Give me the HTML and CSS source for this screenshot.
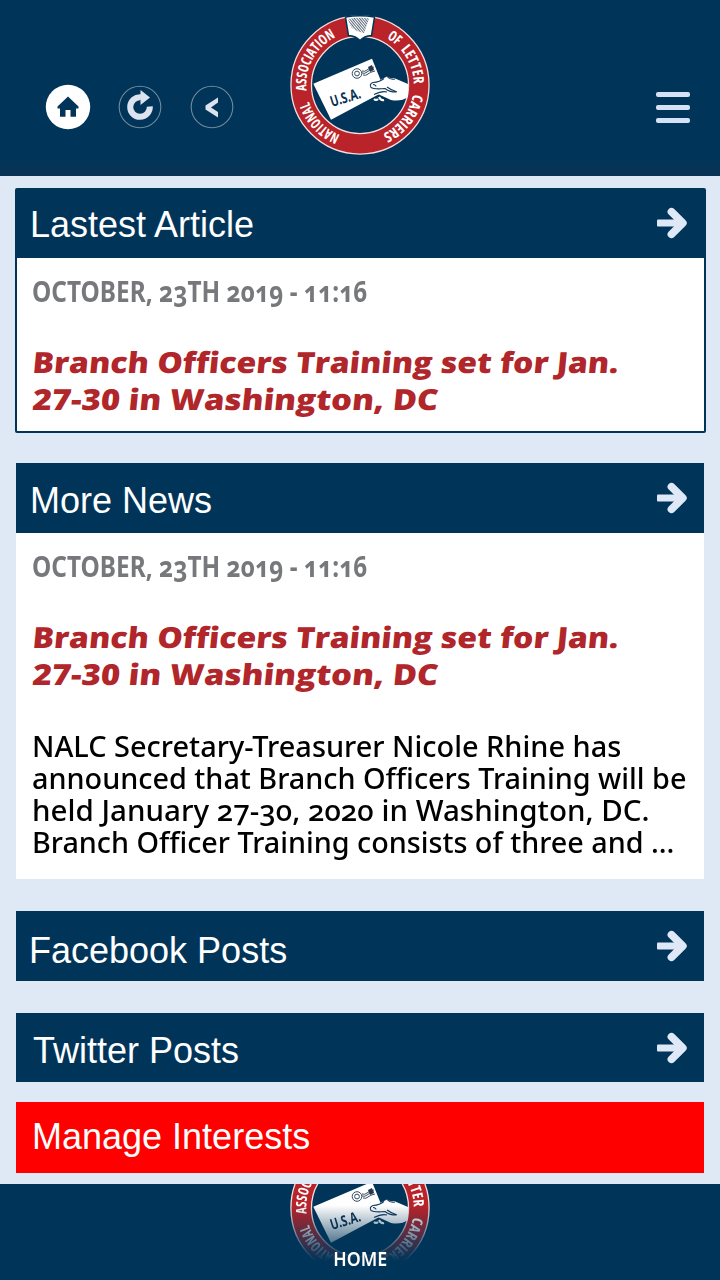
FILE: index.html
```html
<!DOCTYPE html>
<html lang="en">
<head>
<meta charset="utf-8">
<title>NALC</title>
<link rel="stylesheet" href="styles.css">
</head>
<body>
<svg class="defs" width="0" height="0">
  <defs>
    <path id="ring" d="M0 53.8A53.8 53.8 0 0 1 0-53.8A53.8 53.8 0 0 1 0 53.8"/>
    <pattern id="hatch" width="2" height="2" patternUnits="userSpaceOnUse" patternTransform="rotate(-40)"><path d="M0 0V2" stroke="#26394c" stroke-width="1.5"/></pattern>
    <symbol id="seal" viewBox="-70 -70 140 140">
      <circle r="58.8" fill="none" stroke="#f3dfdf" stroke-width="21.8"/>
      <circle r="58.8" fill="none" stroke="#b92329" stroke-width="19.2"/>
      <g class="seal-text">
        <text><textPath href="#ring" startOffset="20.5" textLength="47" lengthAdjust="spacingAndGlyphs">NATIONAL</textPath></text>
        <text><textPath href="#ring" startOffset="78.5" textLength="65" lengthAdjust="spacingAndGlyphs">ASSOCIATION</textPath></text>
        <text><textPath href="#ring" startOffset="196.5" textLength="12.5" lengthAdjust="spacingAndGlyphs">OF</textPath></text>
        <text><textPath href="#ring" startOffset="214.5" textLength="37.5" lengthAdjust="spacingAndGlyphs">LETTER</textPath></text>
        <text><textPath href="#ring" startOffset="262" textLength="52" lengthAdjust="spacingAndGlyphs">CARRIERS</textPath></text>
      </g>
      <path d="M-14.5-68Q0-70.5 14.5-68L11.5-49.5Q4-49 0-44.5Q-4-49-11.5-49.5Z" fill="#fff" stroke="#003559" stroke-width="1.5"/>
      <path d="M-12-66Q0-68 9-66.5L4-52Q-7-54-10-60Z" fill="url(#hatch)"/>
      <path d="M-46.7-1.3 12-26.3 25 6-29 34.7Z" fill="#fff"/>
      <path d="M12 0Q18-3 22-6L27-8.500Q30-6 34-7L48-1V12Q41 17 31 15L20 10 13 7Z" fill="#fff"/>
      <path d="M24-6.500Q20-3 13-2.500Q9-1 11 2.500Q14 4.500 25 3.500Q29 7 36 7M27 2Q31 5 37 7M14 9.500Q22 5.500 27 7M27-8.500Q30-5 35-6M13-.5Q16 0 16 1.500" fill="none" stroke="#123a5c" stroke-width="1.1"/>
      <path d="M14 14q2 2 4 0M19 12q2 4 5 3" fill="none" stroke="#fff" stroke-width="2.2"/>
      <g fill="none" stroke="#354b60" stroke-width="1">
        <circle cx="-3" cy="-11.5" r="4.8"/><circle cx="-3" cy="-11.5" r="2.4"/>
        <path d="M2-14q3 1 5-1t7-3M2-12q3 1 5-1t7-3M3-10q3 1 5-1t7-3"/>
      </g>
      <path d="M8-18 12-20 14-15 10-13Z" fill="#26394c"/>
      <text class="usa" transform="translate(-28 22) rotate(-17)" textLength="31" lengthAdjust="spacingAndGlyphs">U.S.A.</text>
    </symbol>
    <symbol id="arrow" viewBox="0 0 30 32">
      <path d="M1 12.500H22V19.500H1Q0 19.500 0 18.500V13.500Q0 12.500 1 12.500Z" fill="#dfe8f6"/>
      <path d="M14.500 4.800 25.800 16 14.500 27.200" fill="none" stroke="#dfe8f6" stroke-width="7.8" stroke-linecap="round" stroke-linejoin="round"/>
    </symbol>
  </defs>
</svg>
<div class="app">
  <header class="topbar">
    <nav class="controls">
      <svg width="46" height="46" viewBox="-23 -23 46 46"><circle r="22.2" fill="#fff"/><path d="M0-10.500-10.500-.5V1.500H-8V9.700H-2.500V3H2.500V9.700H8V1.500H10.500V-.5Z" fill="#003559"/></svg>
      <svg width="46" height="46" viewBox="-23 -23 46 46"><circle r="20.8" fill="none" stroke="#70899f" stroke-width="1.1"/><path d="M1-9.700A9.800 9.800 0 1 0 9.800-.5" fill="none" stroke="#dce3ef" stroke-width="6"/><path d="M.5-17 10-9.500.5-2Z" fill="#dce3ef"/></svg>
      <svg width="46" height="46" viewBox="-23 -23 46 46"><circle r="20.8" fill="none" stroke="#70899f" stroke-width="1.1"/><path d="M6-9.500V-4.500L-1 .5 6 5V10.500L-6.500 2.500V-1.500Z" fill="#dce3ef"/></svg>
    </nav>
    <svg class="logo" width="140" height="140"><use href="#seal"/></svg>
    <div class="menu"><i></i><i></i><i></i></div>
  </header>
  <main class="content">
    <section class="card outlined">
      <h2 class="bar"><span>Lastest Article</span><svg width="30" height="32"><use href="#arrow"/></svg></h2>
      <div class="body">
        <p class="date"><span>OCTOBER, 23TH 2019 - 11:16</span></p>
        <h3 class="title"><span>Branch Officers Training set for Jan.</span><span class="second">27-30 in Washington, DC</span></h3>
      </div>
    </section>
    <section class="card news">
      <h2 class="bar"><span>More News</span><svg width="30" height="32"><use href="#arrow"/></svg></h2>
      <div class="body">
        <p class="date"><span>OCTOBER, 23TH 2019 - 11:16</span></p>
        <h3 class="title"><span>Branch Officers Training set for Jan.</span><span class="second">27-30 in Washington, DC</span></h3>
        <p class="summary"><span class="l1">NALC Secretary-Treasurer Nicole Rhine has</span><span class="l2">announced that Branch Officers Training will be</span><span class="l3">held January 27-30, 2020 in Washington, DC.</span><span class="l4">Branch Officer Training consists of three and ...</span></p>
      </div>
    </section>
    <h2 class="bar facebook"><span>Facebook Posts</span><svg width="30" height="32"><use href="#arrow"/></svg></h2>
    <h2 class="bar twitter"><span>Twitter Posts</span><svg width="30" height="32"><use href="#arrow"/></svg></h2>
    <h2 class="bar interests"><span>Manage Interests</span></h2>
  </main>
  <footer class="footer">
    <svg class="logo" width="140" height="140"><use href="#seal"/></svg>
    <span class="home">HOME</span>
  </footer>
</div>
</body>
</html>
```
FILE: styles.css
```css
* { box-sizing: border-box; margin: 0; padding: 0; }
body { background: #dfe9f5; font-family: "Noto Sans", sans-serif; }
.defs { position: absolute; }
.app { width: 720px; height: 1280px; display: flex; flex-direction: column; overflow: hidden; }
.topbar {
  height: 176px; flex: none; display: grid; grid-template-columns: 290px 140px 1fr;
  align-items: start; background: linear-gradient(#003559 88%, #0a3355);
}
.controls { display: flex; gap: 26px; padding: 84px 0 0 45px; }
.topbar .logo { margin-top: 15px; }
.menu { display: flex; flex-direction: column; gap: 8px; justify-self: end; padding: 92px 30px 0 0; }
.menu i { width: 34px; height: 5px; border-radius: 2px; background: #d5e2f5; }
.content { flex: none; height: 1008px; padding: 12px 16px 0; display: flex; flex-direction: column; }
.card { background: #fff; flex: none; }
.outlined { height: 245px; margin: 0 -2px 30px -1px; border: 2px solid #003559; border-radius: 2px; }
.news { height: 416px; margin-bottom: 32px; }
.bar {
  height: 70px; flex: none; display: flex; justify-content: space-between; align-items: center;
  padding: 0 17px 0 14px; background: #003559; color: #fff;
  font: 36px/42px "Liberation Sans", Arial, sans-serif;
}
.bar span { padding-top: 5px; }
.outlined .bar { height: 68px; padding: 0 17px 2px 13px; }
.outlined .bar span { padding-top: 3px; }
.facebook { margin-bottom: 32px; }
.facebook span { padding-top: 9px; margin-left: -1px; }
.twitter { height: 69px; padding-left: 17px; margin-bottom: 20px; }
.twitter span { padding-top: 7px; }
.interests { height: 71px; padding-left: 16px; background: #f00; }
.interests span { margin-top: -2px; padding-top: 0; }
.body { padding: 13px 16px 0; }
.outlined .body { padding-left: 15px; }
.body span { display: block; width: max-content; white-space: nowrap; transform-origin: 0 76%; }
.date { font-size: 28px; line-height: 40px; font-weight: 700; color: #77787b; font-feature-settings: "onum"; }
.date span { transform: scaleX(.871); }
.title { margin-top: 32px; font: 800 29px/37px "Open Sans", sans-serif; color: #b0262a; }
.title span { transform: scaleX(1.1) skewX(-5deg); }
.title .second { transform: scaleX(1.133) skewX(-5deg); }
.summary { margin-top: 38px; font-size: 29px; line-height: 32px; font-weight: 500; color: #000; font-feature-settings: "onum"; }
.l1 { transform: scaleX(.997); }
.l2 { transform: scaleX(.993); }
.l3 { transform: scaleX(1.019); }
.l4 { transform: scaleX(.991); }
.footer {
  height: 96px; flex: none; overflow: hidden; background: #003559;
  display: flex; flex-direction: column; align-items: center;
}
.footer .logo { flex: none; margin-top: -46px; mask-image: linear-gradient(#000 48%, transparent 88%); }
.home { margin-top: -32px; color: #fff; font-size: 20px; line-height: 26px; font-weight: 600; transform: scaleX(.89); }
.seal-text { font: 700 14.5px "Open Sans", sans-serif; font-stretch: 75%; fill: #fff; }
.usa { font: 700 15px "Open Sans", sans-serif; fill: #0a2f50; }
```
